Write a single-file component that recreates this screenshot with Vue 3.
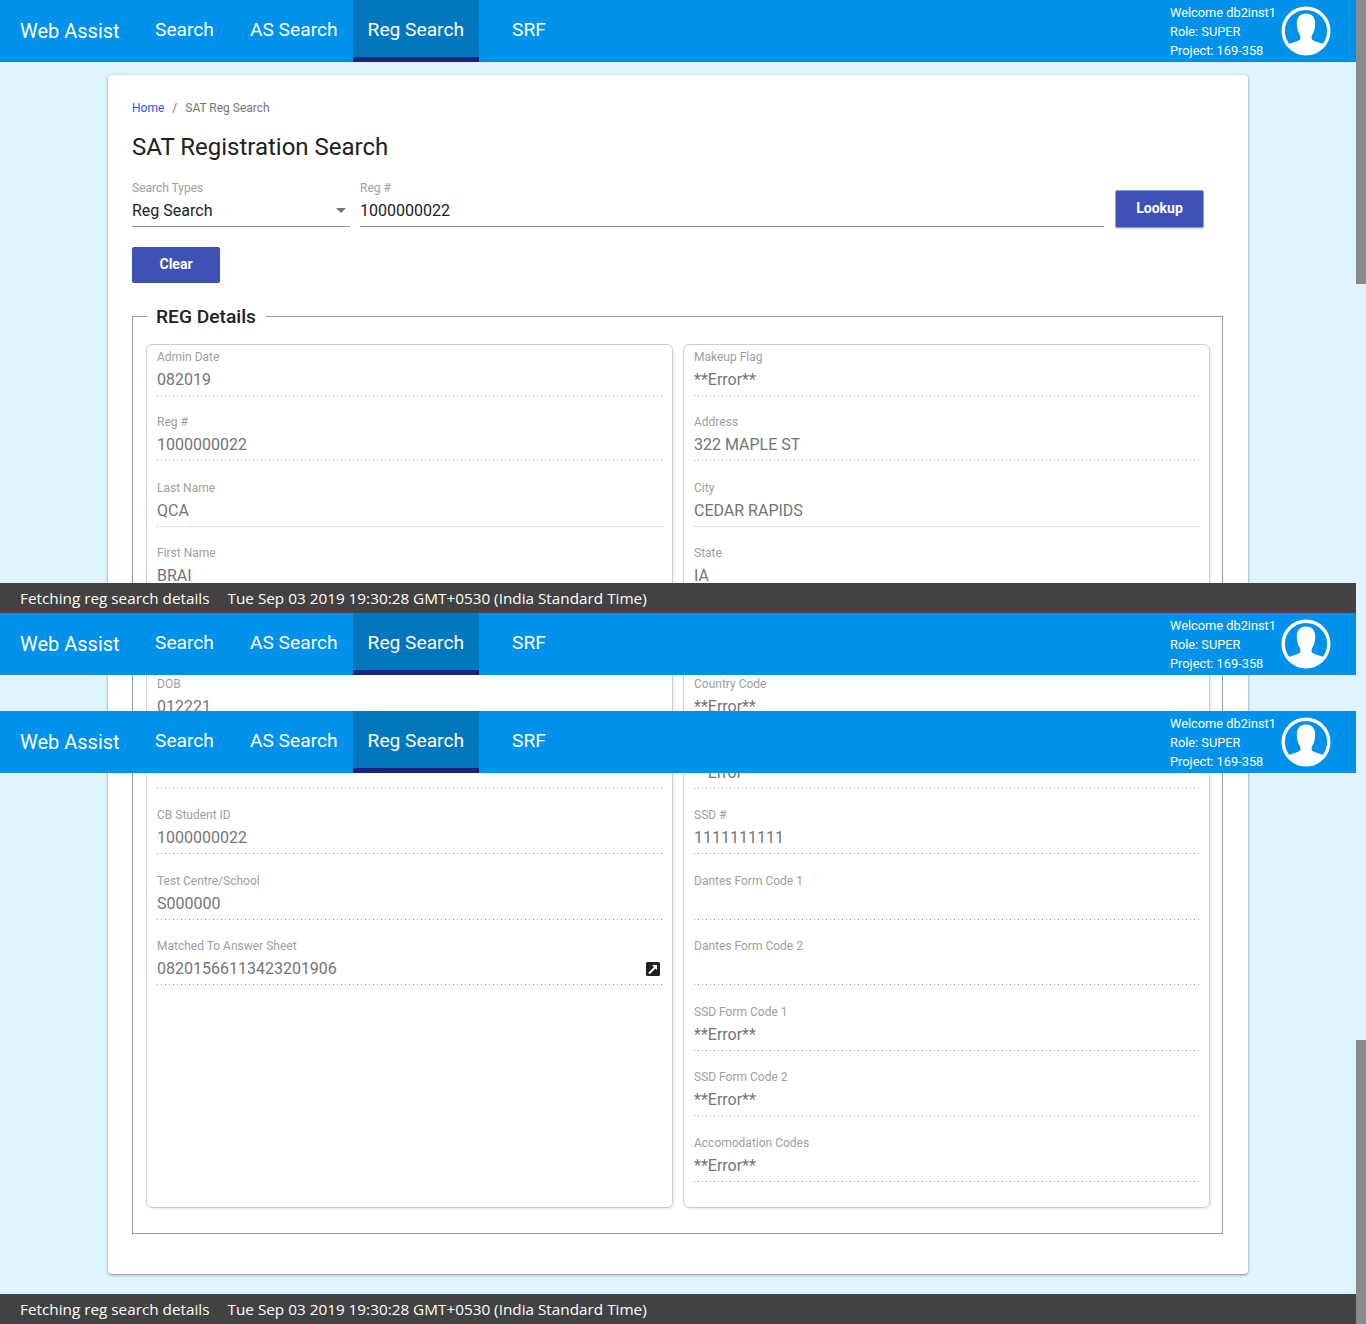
<script setup>
const navLinks = [
  { label: 'Search', cls: '' },
  { label: 'AS Search', cls: '' },
  { label: 'Reg Search', cls: 'active' },
  { label: 'SRF', cls: 'srf' },
];

// the capture repeats the fixed header further down the page
const overlayNavs = [613, 711];

const leftFields = [
  { label: 'Admin Date', value: '082019' },
  { label: 'Reg #', value: '1000000022' },
  { label: 'Last Name', value: 'QCA' },
  { label: 'First Name', value: 'BRAI' },
  { label: '', value: '' },
  { label: 'DOB', value: '012221' },
  { label: '', value: '' },
  { label: 'CB Student ID', value: '1000000022' },
  { label: 'Test Centre/School', value: 'S000000' },
  { label: 'Matched To Answer Sheet', value: '08201566113423201906', link: true },
];

const rightFields = [
  { label: 'Makeup Flag', value: '**Error**' },
  { label: 'Address', value: '322 MAPLE ST' },
  { label: 'City', value: 'CEDAR RAPIDS' },
  { label: 'State', value: 'IA' },
  { label: '', value: '' },
  { label: 'Country Code', value: '**Error**' },
  { label: '', value: '**Error**' },
  { label: 'SSD #', value: '1111111111' },
  { label: 'Dantes Form Code 1', value: '' },
  { label: 'Dantes Form Code 2', value: '' },
  { label: 'SSD Form Code 1', value: '**Error**' },
  { label: 'SSD Form Code 2', value: '**Error**' },
  { label: 'Accomodation Codes', value: '**Error**' },
];

const columns = [leftFields, rightFields];
const statusText = 'Fetching reg search details';
const statusTime = 'Tue Sep 03 2019 19:30:28 GMT+0530 (India Standard Time)';
</script>

<template>
  <div class="page">
    <template v-for="(top, n) in [null, ...overlayNavs]" :key="n">
      <header class="nav" :class="{ over: top !== null }" :style="top !== null ? { top: top + 'px' } : null">
        <div class="brand">Web Assist</div>
        <a v-for="link in navLinks" :key="link.label" class="nav-link" :class="link.cls">{{ link.label }}</a>
        <div class="user">
          <div class="user-text">
            <div>Welcome db2inst1</div>
            <div>Role: SUPER</div>
            <div>Project: 169-358</div>
          </div>
          <svg class="avatar" viewBox="0 0 50 50" width="50" height="50">
            <circle cx="25" cy="25" r="22.8" fill="none" stroke="#fff" stroke-width="3.4" />
            <path fill="#fff" d="M25 7.5c-6 0-9.2 4-9.2 9.8 0 4.6 1 8.6 3 11.6 1 1.8.9 4-.3 5-2 1.200-7 2.500-11 4 4 5 10.200 8.300 17.500 8.300s13.500-3.300 17.500-8.300c-4-1.500-9-2.800-11-4-1.200-1-1.300-3.200-.3-5 2-3 3-7 3-11.600 0-5.800-3.200-9.800-9.200-9.800z" />
          </svg>
        </div>
      </header>
    </template>

    <main class="content">
      <section class="card">
        <div class="breadcrumb">
          <a class="crumb-link">Home</a>
          <span class="crumb-sep">/</span>
          <span>SAT Reg Search</span>
        </div>
        <h1 class="title">SAT Registration Search</h1>

        <div class="search-row">
          <div class="control select-control">
            <label>Search Types</label>
            <div class="control-value">
              <span>Reg Search</span>
              <i class="caret"></i>
            </div>
          </div>
          <div class="control input-control">
            <label>Reg #</label>
            <div class="control-value">1000000022</div>
          </div>
          <button class="btn lookup">Lookup</button>
        </div>
        <button class="btn clear">Clear</button>

        <fieldset class="details">
          <legend>REG Details</legend>
          <div class="columns">
            <div v-for="(fields, c) in columns" :key="c" class="column">
              <div v-for="(field, i) in fields" :key="i" class="field">
                <div class="field-label">{{ field.label }}</div>
                <div class="field-value">
                  <span>{{ field.value }}</span>
                  <svg v-if="field.link" class="open-icon" viewBox="0 0 14 14" width="14" height="14">
                    <rect width="14" height="14" rx="1.500" fill="#212121" />
                    <path d="M3 11.500 10 4.500" stroke="#fff" stroke-width="2" fill="none" />
                    <path d="M6 3h5v5z" fill="#fff" />
                  </svg>
                </div>
              </div>
            </div>
          </div>
        </fieldset>
      </section>
    </main>

    <div class="status status-mid">
      <span>{{ statusText }}</span>
      <span>{{ statusTime }}</span>
    </div>
    <div class="status status-end">
      <span>{{ statusText }}</span>
      <span>{{ statusTime }}</span>
    </div>

    <div class="thumb thumb-top"></div>
    <div class="thumb thumb-bottom"></div>
  </div>
</template>

<style scoped>
.page {
  position: relative;
  width: 1356px;
  height: 1324px;
  font-family: Roboto, sans-serif;
}

.nav {
  display: flex;
  align-items: stretch;
  width: 1356px;
  height: 62px;
  background: #0091ea;
  color: #fff;
}
.nav.over {
  position: absolute;
  left: 0;
  z-index: 5;
}
.brand {
  display: flex;
  align-items: center;
  width: 140px;
  padding-left: 20px;
  box-sizing: border-box;
  font-size: 20px;
}
.nav-link {
  display: flex;
  align-items: center;
  padding: 2px 15px 0;
  margin-right: 6px;
  font-size: 19.2px;
  border-bottom: 5px solid transparent;
}
.nav-link:nth-of-type(2) {
  margin-right: 0;
}
.nav-link.active {
  background: #0277bd;
  border-bottom-color: #1a237e;
  margin-right: 18px;
}
.nav-link.srf {
  margin-right: 0;
}
.user {
  display: flex;
  align-items: center;
  margin-left: auto;
  padding-right: 25px;
}
.user-text {
  font-size: 12.8px;
  line-height: 19px;
  margin-right: 5px;
}
.avatar {
  display: block;
}

.content {
  padding: 13px 108px 20px;
}
.card {
  height: 1199px;
  box-sizing: border-box;
  padding: 24px;
  background: #fff;
  border-radius: 4px;
  box-shadow: 0 1px 3px rgba(0, 0, 0, 0.45);
}

.breadcrumb {
  padding-top: 1px;
  font-size: 12px;
  line-height: 16px;
  color: #757575;
}
.crumb-link {
  color: #304ffe;
}
.crumb-sep {
  margin: 0 8px;
}
.title {
  margin: 15px 0 0;
  font-size: 24px;
  line-height: 32px;
  font-weight: 400;
  color: #212121;
}

.search-row {
  display: flex;
  align-items: flex-start;
  margin-top: 17px;
}
.control label {
  display: block;
  font-size: 12px;
  line-height: 16px;
  color: #9e9e9e;
}
.control-value {
  display: flex;
  align-items: center;
  justify-content: space-between;
  height: 31px;
  padding-bottom: 1px;
  box-sizing: border-box;
  font-size: 16px;
  color: #212121;
  border-bottom: 1px solid #949494;
}
.select-control {
  width: 218px;
  margin-right: 10px;
}
.input-control {
  width: 744px;
  margin-right: 11px;
}
.caret {
  width: 0;
  height: 0;
  margin-right: 4px;
  border-left: 5px solid transparent;
  border-right: 5px solid transparent;
  border-top: 5px solid #757575;
}
.btn {
  display: block;
  box-sizing: border-box;
  padding: 0 0 2px;
  font-family: inherit;
  font-size: 14px;
  font-weight: 700;
  color: #fff;
  background: #3f51b5;
  border: none;
  border-radius: 2px;
}
.lookup {
  width: 89px;
  height: 38px;
  margin-top: 10px;
  border: 1px solid #7ea4ee;
  box-shadow: 0 1px 1px rgba(0, 0, 0, 0.15);
}
.clear {
  width: 88px;
  height: 36px;
  margin-top: 19px;
}

.details {
  margin: 21px 1px 0 0;
  padding: 16px 12px 25px 13px;
  height: 930px;
  box-sizing: border-box;
  border: 1px solid #9a9a9a;
  min-width: 0;
}
.details legend {
  margin-left: 1px;
  padding: 2px 10px 0 9px;
  font-size: 19.2px;
  line-height: 22px;
  font-weight: 500;
  color: #212121;
}
.columns {
  display: flex;
  gap: 10px;
  height: 864px;
}
.column {
  width: 527px;
  box-sizing: border-box;
  padding: 1.7px 9px 0 10px;
  border: 1px solid #cfcfcf;
  border-radius: 6px;
  box-shadow: 2px 2px 2px rgba(0, 0, 0, 0.06);
}
.field {
  height: 65.5px;
}
.field-label {
  height: 16px;
  padding-top: 2px;
  font-size: 12px;
  line-height: 16px;
  color: #9e9e9e;
}
.field-value {
  display: flex;
  align-items: center;
  justify-content: space-between;
  height: 31px;
  padding-bottom: 2px;
  box-sizing: border-box;
  font-size: 16px;
  color: #757575;
  background: linear-gradient(to right, #9e9e9e 1px, transparent 1px) left bottom / 4px 1px repeat-x;
}
.open-icon {
  display: block;
  margin-right: 3px;
}

.status {
  position: absolute;
  left: 0;
  z-index: 6;
  display: flex;
  gap: 18px;
  align-items: center;
  width: 1356px;
  height: 30px;
  box-sizing: border-box;
  padding-left: 20px;
  background: #424242;
  color: #fff;
  font-family: "Open Sans", sans-serif;
  font-size: 15.3px;
}
.status-mid {
  top: 583px;
}
.status-end {
  top: 1294px;
}

.thumb {
  position: absolute;
  left: 1356px;
  width: 10px;
  background: #8a8a8a;
}
.thumb-top {
  top: 0;
  height: 284px;
}
.thumb-bottom {
  top: 1040px;
  height: 284px;
}
</style>

<style>
html,
body {
  background: #e0f4ff;
}
</style>
